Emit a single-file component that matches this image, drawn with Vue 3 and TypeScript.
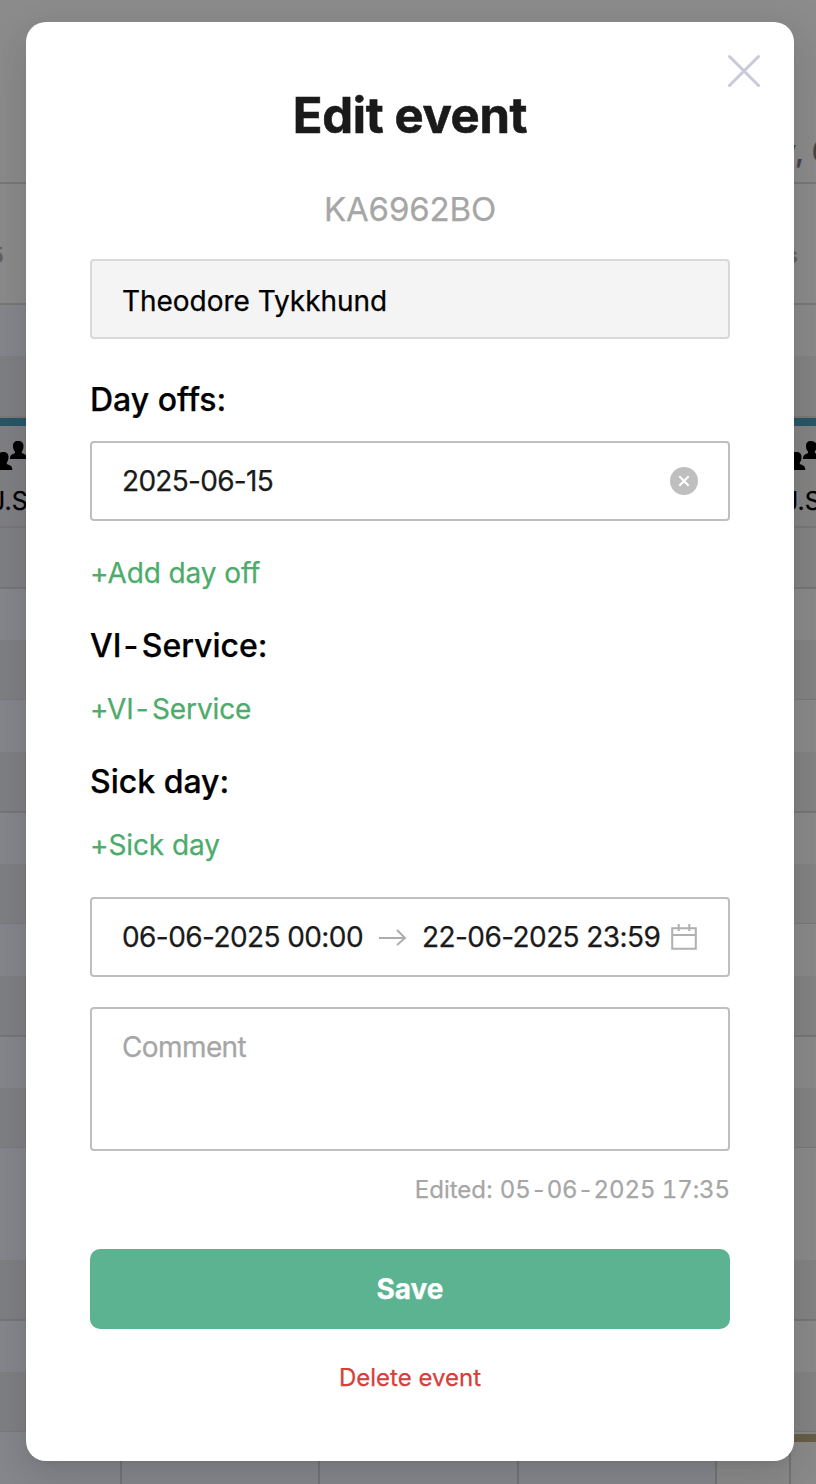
<script setup lang="ts">
interface Band { h: number; tone: string; line?: string }

const bands: Band[] = [
  { h: 184, tone: 'head', line: 'strong' },
  { h: 121, tone: 'head', line: 'strong' },
  { h: 51, tone: 'light' },
  { h: 62, tone: 'dark', line: 'strong' },
  { h: 110, tone: 'event', line: 'strong' },
  { h: 61, tone: 'dark', line: 'thin' },
  { h: 51, tone: 'light' },
  { h: 60, tone: 'dark', line: 'faint' },
  { h: 52, tone: 'light' },
  { h: 61, tone: 'dark', line: 'thin' },
  { h: 51, tone: 'light' },
  { h: 60, tone: 'dark', line: 'faint' },
  { h: 52, tone: 'light' },
  { h: 61, tone: 'dark', line: 'thin' },
  { h: 51, tone: 'light' },
  { h: 60, tone: 'dark', line: 'faint' },
  { h: 112, tone: 'light' },
  { h: 61, tone: 'dark', line: 'thin' },
  { h: 51, tone: 'light' },
  { h: 60, tone: 'dark', line: 'faint' },
  { h: 52, tone: 'light' },
]
const columnLines: number[] = [120, 318, 517, 715, 789]
</script>

<template>
  <div class="screen">
    <div class="calendar">
      <div v-for="side in ['left', 'right']" :key="side" :class="['col', side]">
        <div
          v-for="(b, i) in bands"
          :key="i"
          :class="['band', b.tone, b.line]"
          :style="{ height: b.h + 'px' }"
        ></div>
      </div>
      <i v-for="x in columnLines" :key="x" class="vline" :style="{ left: x + 'px' }"></i>
      <span class="frag num-left">5</span>
      <span class="frag num-right">s</span>
      <span class="frag date-right">y, 6</span>
      <div v-for="side in ['left', 'right']" :key="'e' + side" :class="['event-frag', 'at-' + side]">
        <svg width="36" height="34" viewBox="0 0 36 34">
          <path d="M28 3c4 0 5.500 2 5.500 5 0 3-1 4.500-1.700 5.500v1.500c2.500 1.500 5.500 1 5.500 6H20c0-5 3-4.500 5-6v-1.500c-1-1-2-2.500-2-5.500 0-3 1.500-5 5-5z" />
          <path transform="translate(-15 11)" d="M28 3c4 0 5.500 2 5.500 5 0 3-1 4.500-1.700 5.500v1.500c2.500 1.500 5.500 1 5.500 6H20c0-5 3-4.500 5-6v-1.500c-1-1-2-2.500-2-5.500 0-3 1.500-5 5-5z" />
        </svg>
        <span>J.S</span>
      </div>
      <i class="tan"></i>
    </div>

    <section class="modal">
      <svg class="close" width="34" height="34" viewBox="0 0 34 34">
        <path d="M2.500 2.500l29 29M31.500 2.500l-29 29" fill="none" stroke="#c9c9d9" stroke-width="3" stroke-linecap="round" />
      </svg>
      <h1>Edit event</h1>
      <p class="plate">KA6962BO</p>
      <div class="field disabled"><span class="name">Theodore Tykkhund</span></div>
      <h2 class="dayoffs">Day offs:</h2>
      <div class="field">
        <span class="date">2025-06-15</span>
        <svg class="end" width="28" height="28" viewBox="0 0 28 28">
          <circle cx="14" cy="14" r="14" fill="#bfbfbf" />
          <path d="M9.300 9.200l9.400 9.600M18.700 9.200l-9.400 9.600" fill="none" stroke="#fff" stroke-width="2" />
        </svg>
      </div>
      <a class="link add">+Add day off</a>
      <h2 class="vi">VI<b>-</b>Service:</h2>
      <a class="link addvi">+VI<b>-</b>Service</a>
      <h2 class="sick">Sick day:</h2>
      <a class="link addsick">+Sick day</a>
      <div class="field range">
        <span class="date">06-06-2025 00:00</span>
        <svg class="arrow" width="28" height="18" viewBox="0 0 28 18">
          <path d="M0 10h26M18 2l8 8l-8 7" fill="none" stroke="#adadad" stroke-width="2" />
        </svg>
        <span class="date">22-06-2025 23:59</span>
        <svg class="end" width="28" height="28" viewBox="0 0 28 28">
          <path d="M2.200 5.200h23.600v20.600H2.200zM2.200 12h23.600M8.700 1v7M19.300 1v7" fill="none" stroke="#b0b0b0" stroke-width="2" />
        </svg>
      </div>
      <div class="comment">Comment</div>
      <p class="edited">Edited: <span class="stamp">05<b>-</b>06<b>-</b>2025 17:35</span></p>
      <button class="save">Save</button>
      <a class="delete">Delete event</a>
    </section>
  </div>
</template>

<style>
html, body { margin: 0; background: #8c8c8c; }
</style>

<style scoped>
.screen {
  position: relative;
  box-sizing: border-box;
  width: 816px;
  height: 1484px;
  padding: 22px 22px 23px 26px;
  overflow: hidden;
  font-family: Inter, "Liberation Sans", sans-serif;
  -webkit-text-stroke: 0.25px currentColor;
}
.calendar { position: absolute; inset: 0; display: flex; }
.col { width: 716px; }
.col.right { flex: 1; }
.band { box-sizing: border-box; }
.head { background: #8c8c8c; }
.left .light { background: #87888d; }
.left .dark { background: #808185; }
.right .light { background: #8b8b8b; }
.right .dark { background: #848484; }
.left .event { background: #808185; border-top: 8px solid #2a5768; }
.right .event { background: #848484; border-top: 8px solid #2a5768; }
.strong { border-bottom: 2px solid #797979; }
.thin { border-bottom: 2px solid #77777a; }
.faint { border-bottom: 1px solid #7a7a7d; }
.vline { position: absolute; top: 1440px; bottom: 0; width: 2px; background: #747578; }
.frag { position: absolute; line-height: 1; }
.num-left { left: -10px; top: 244px; font-size: 22px; font-weight: 500; color: #606060; }
.num-right { left: 786px; top: 244px; font-size: 22px; font-weight: 500; color: #606060; }
.date-right { left: 779px; top: 136px; font-size: 30px; font-weight: 500; color: #45454b; white-space: pre; }
.event-frag { position: absolute; top: 438px; height: 82px; color: #000; font-size: 25px; }
.event-frag svg { display: block; margin-left: -10px; }
.event-frag span { display: block; margin: 16px 0 0 -9px; line-height: 27px; white-space: nowrap; }
.at-left { left: 0; }
.at-right { left: 793px; }
.tan { position: absolute; left: 792px; right: 0; top: 1434px; height: 8px; border-radius: 4px 0 0 0; background: #675f48; }

.modal {
  position: relative;
  box-sizing: border-box;
  display: flex;
  flex-direction: column;
  width: 768px;
  height: 1439px;
  padding: 64px 64px 0;
  border-radius: 20px;
  background: #fff;
  box-shadow: 0 12px 32px rgba(0, 0, 0, 0.08), 0 6px 12px -8px rgba(0, 0, 0, 0.12), 0 18px 56px 16px rgba(0, 0, 0, 0.05);
}
.close { position: absolute; right: 33px; top: 32px; }
h1, h2, p { margin: 0; }
b { font-weight: inherit; margin: 0 2px; }
h1 { text-align: center; font-size: 49px; line-height: 60px; font-weight: 700; letter-spacing: -0.35px; color: #1a1a1a; -webkit-text-stroke-width: 0.6px; }
.plate { margin-top: 43px; text-align: center; font-size: 33px; line-height: 40px; letter-spacing: -0.15px; color: #a6a6a6; }
.field {
  box-sizing: border-box;
  display: flex;
  align-items: center;
  height: 80px;
  border: 2px solid #bfbfbf;
  border-radius: 4px;
  padding: 0 30px;
  font-size: 28px;
  color: #1a1a1a;
}
.field.disabled { margin-top: 30px; background: #f4f4f4; border-color: #d9d9d9; color: #000; }
.name { padding-top: 4px; letter-spacing: -0.03px; }
.date { letter-spacing: -0.7px; white-space: nowrap; }
.range .date { letter-spacing: -0.58px; }
.end { margin-left: auto; flex: none; }
h2 { font-size: 32px; line-height: 40px; font-weight: 500; color: #000; }
.dayoffs { margin: 41px 0 21px; }
.link { font-size: 28px; line-height: 36px; color: #4dab6b; letter-spacing: -0.1px; }
.add { margin-top: 34px; }
.vi, .sick { margin-top: 35px; }
.vi b { margin: 0 3.5px 0 2px; }
.addvi b { margin: 0 3.5px 0 2px; }
.addvi, .addsick { margin-top: 25px; }
.range { margin-top: 34px; }
.arrow { flex: none; margin: 0 15px 0 16px; }
.comment {
  box-sizing: border-box;
  height: 144px;
  margin-top: 30px;
  padding: 20px 30px;
  border: 2px solid #bfbfbf;
  border-radius: 4px;
  font-size: 28px;
  line-height: 36px;
  letter-spacing: -0.6px;
  color: #a6a6a6;
}
.edited { margin-top: 24px; text-align: right; font-size: 24px; line-height: 30px; color: #a6a6a6; }
.stamp { letter-spacing: -0.1px; font-variant-numeric: tabular-nums; }
.stamp b { display: inline-block; width: 16px; margin: 0; text-align: center; }
.save {
  height: 80px;
  margin-top: 44px;
  padding: 0;
  border: 0;
  border-radius: 10px;
  background: #5cb391;
  color: #fff;
  font: 700 28px/80px Inter, sans-serif;
}
.delete { margin-top: 33px; text-align: center; font-size: 24px; line-height: 32px; color: #d4403a; }
</style>
